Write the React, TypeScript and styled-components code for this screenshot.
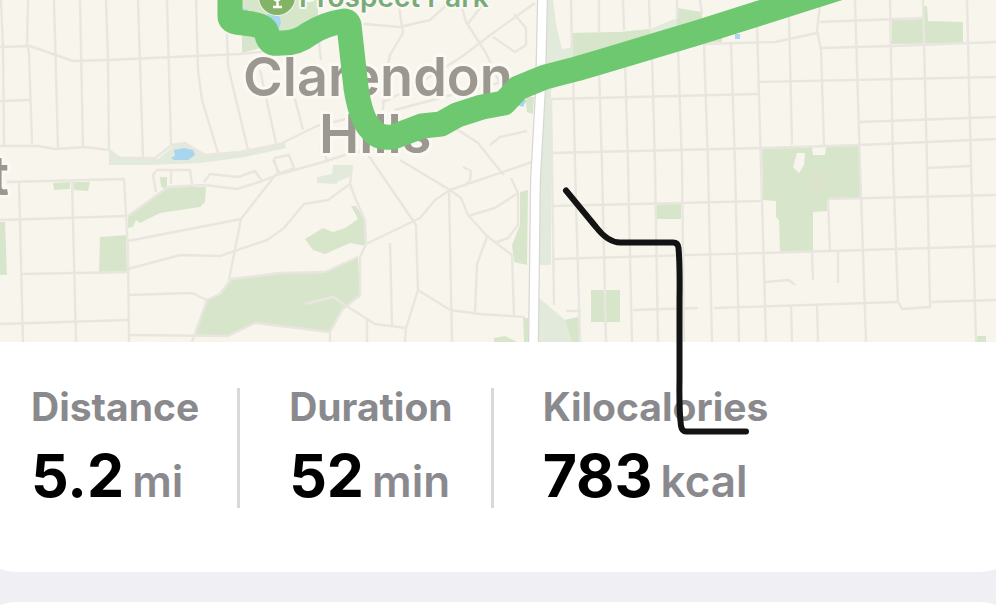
import React from "react";
import styled, { createGlobalStyle } from "styled-components";

const GlobalStyle = createGlobalStyle`
  *, *::before, *::after { box-sizing: border-box; }
  html, body { margin: 0; background: #f0eff4; }
  body { font-family: Inter, "Liberation Sans", sans-serif; overflow: hidden; }
`;

const Page = styled.main`
  position: relative;
  display: flex;
  flex-direction: column;
  gap: 30px;
  min-height: 100vh;
  overflow: hidden;
`;

const Card = styled.section<{ $edge: "top" | "bottom" }>`
  margin: 0 -28px;
  padding: 0 28px;
  background: #fff;
  overflow: hidden;
  border-radius: ${(p) => (p.$edge === "top" ? "44px 44px 0 0" : "0 0 44px 44px")};
  flex: ${(p) => (p.$edge === "top" ? "1 0 88px" : "none")};
`;

const MapView = styled.svg`
  display: block;
  width: 100%;
  height: 342px;
  background: #f8f5ed;
`;

const PlaceLabel = styled.text<{ $park?: boolean }>`
  font-family: Inter, sans-serif;
  font-size: ${(p) => (p.$park ? 28 : 54)}px;
  font-weight: 600;
  fill: ${(p) => (p.$park ? "#79ab78" : "#9c9890")};
  stroke: #fbf9f4;
  stroke-width: ${(p) => (p.$park ? 4 : 6)}px;
  stroke-linejoin: round;
  paint-order: stroke;
`;

const Stats = styled.dl`
  display: flex;
  margin: 0;
  padding: 46px 31px 64px;
`;

const Stat = styled.div`
  display: flex;
  flex-direction: column;
  height: 120px;
  & + & {
    padding-left: 49px;
  }
  &:not(:last-child) {
    padding-right: 38px;
    border-right: 3px solid #d9d9db;
  }
`;

const StatName = styled.dt`
  font-size: 39px;
  line-height: 38px;
  font-weight: 700;
  color: #8a8a8e;
`;

const StatValue = styled.dd`
  display: flex;
  align-items: baseline;
  gap: 8px;
  margin: 10px 0 0;
  font-size: 59px;
  line-height: 80px;
  font-weight: 700;
  color: #000;
`;

const Unit = styled.span`
  font-size: 44px;
  font-weight: 600;
  color: #8a8a8e;
`;

const Marker = styled.svg`
  position: absolute;
  left: 560px;
  top: 184px;
  width: 192px;
  height: 254px;
  pointer-events: none;
`;

const GREENS = [
  "0,222 5,222 7,275 0,275",
  "53,183 70,182 70,189 54,190",
  "73,182 90,182 88,191 74,190",
  "100,237 126,235 127,272 99,274",
  "128,217 168,187 206,187 205,202 200,207 160,213 140,223 136,220 133,227 128,228",
  "160,177 167,177 167,190 161,187",
  "195,335 207,300 222,293 231,280 280,273 325,272 358,257 360,297 342,310 330,332 270,325 255,323 228,336",
  "351,206 356,206 365,220 365,246 350,243 325,254 313,250 305,239 323,228 333,232 345,228 358,219",
  "520,192 528,190 527,265 514,262 512,245 520,225",
  "523,318 528,318 528,342 524,342",
  "494,338 505,336 517,342 494,342",
  "525,97 534,97 533,114 527,112",
  "242,0 318,0 318,20 290,40 242,53",
  "573,33 620,32 650,29 650,50 573,66",
  "677,8 702,12 702,26 677,26",
  "703,36 722,32 722,42 703,43",
  "892,20 922,19 923,6 927,6 928,21 963,22 963,43 892,44",
  "762,147 812,147 813,155 825,155 826,146 860,145 860,198 828,199 827,211 813,212 813,251 780,252 779,220 776,217 776,201 763,200",
  "656,204 681,204 681,219 656,219",
  "591,290 620,290 620,322 591,322",
  "977,336 986,336 986,342 977,342",
  "565,320 578,317 580,342 572,342",
];

const PALE_GREENS = [
  "109,149 122,159 158,159 174,146 186,143 206,155 245,152 285,143 286,148 245,157 200,163 150,165 109,165",
  "546,0 553,0 556,25 562,49 570,48 573,33 620,32 650,29 677,18 677,40 573,72 551,90 551,265 536,265",
  "538,297 565,320 578,317 580,342 538,342",
  "333,165 351,165 351,176 337,182 337,184 317,183 317,177 332,174",
];

const WATER = [
  "171,158 175,156 174,150 184,148 193,150 195,155 188,160 174,160",
  "242,8 248,10 248,14 242,14",
  "268,12 279,15 281,22 278,32 266,26",
  "517,100 521,95 526,101 523,107 517,105",
  "735,34 740,34 740,39 735,39",
];

const ROADS = [
  "1,0 3,47 4,145",
  "28,0 27,45 29,52 32,144",
  "54,0 58,148",
  "80,0 83,148",
  "106,0 108,60 109,150",
  "138,0 143,157",
  "167,0 171,145",
  "196,0 198,70 202,100 218,153",
  "227,34 228,66 248,150",
  "260,70 276,143",
  "0,47 30,46 73,61 107,60 240,54 280,50",
  "0,101 30,100",
  "0,146 38,146 55,149 85,147 109,150 120,158 155,158 172,145 185,143 205,155 240,152 280,144 317,126 350,118",
  "364,24 400,27 430,20 452,0",
  "398,0 403,33 390,55 385,80 383,110",
  "460,0 466,22 486,53 505,95",
  "535,3 493,33 460,58 413,87 382,103",
  "493,37 515,52 526,45 526,28 514,14",
  "467,25 490,-5",
  "395,110 440,98 478,88 510,80",
  "290,80 303,130",
  "318,35 321,60",
  "274,158 289,155 294,168 278,174 274,158",
  "280,174 323,162 345,155 400,143",
  "320,146 328,162",
  "455,128 478,143 498,168 504,175",
  "490,145 500,137 527,131",
  "463,167 471,171 470,180 465,186",
  "7,182 124,179 128,250 129,342",
  "19,182 23,342",
  "72,180 76,342",
  "0,220 127,216",
  "22,274 127,272",
  "0,324 128,320",
  "156,192 153,175 157,170 190,170 192,184",
  "171,171 171,184",
  "128,216 168,187 205,185 237,189 262,181 280,174 273,160",
  "204,182 210,174 238,177 255,171 262,181",
  "276,174 241,219 229,280",
  "128,241 241,219",
  "128,269 180,255 220,256 267,240 284,228 304,204 328,200 350,184 352,165",
  "128,295 192,293 207,300",
  "128,335 228,336 255,323 330,332",
  "192,342 207,300 220,294 231,279 280,273 325,272 358,257",
  "350,184 356,200 365,220 366,244 360,257 360,295 342,310 330,332 330,342",
  "366,244 420,218 435,200 450,190 538,160",
  "375,165 416,225 418,290 406,328 405,342",
  "365,150 375,165",
  "390,243 392,325",
  "449,191 452,342",
  "400,160 450,190 461,198 468,215 487,236 512,255",
  "468,216 495,208 518,193 518,225 508,238 497,242",
  "518,193 511,178",
  "487,237 477,264 475,312",
  "512,255 514,316",
  "418,290 450,310 480,314 525,317",
  "305,304 333,297 345,305 375,324 406,328",
  "367,318 367,342",
  "571,0 572,48",
  "599,0 599,32",
  "623,0 624,30",
  "649,0 650,28",
  "677,0 677,18",
  "700,0 702,14",
  "573,70 575,165 580,342",
  "599,70 602,165 606,342",
  "625,60 628,165 632,342",
  "652,55 655,165 658,342",
  "678,48 682,165 684,342",
  "704,44 708,165 712,342",
  "731,44 735,165 739,342",
  "551,100 552,165 554,305",
  "550,99 758,94",
  "550,153 762,148 860,145 996,139",
  "552,206 762,201",
  "554,259 830,251 996,246",
  "633,310 698,308",
  "714,308 898,302",
  "930,302 996,300",
  "566,311 581,311",
  "703,44 775,42 817,33",
  "757,25 761,165 766,342",
  "789,17 792,145",
  "820,5 817,30 821,50 824,145",
  "855,0 860,165 866,342",
  "890,0 893,165 898,302 902,309 930,307 927,165 923,0",
  "967,0 971,165 976,342",
  "820,22 922,18",
  "821,48 892,46 996,42",
  "757,82 996,77",
  "860,122 996,117",
  "927,168 970,166",
  "828,199 996,195",
  "828,199 830,250",
  "812,253 813,280",
  "838,252 838,283",
  "765,282 789,280 795,285",
  "791,306 792,342",
  "817,306 818,342",
];

const ROUTE =
  "M230-14V16Q230 21 236 22L252 24Q267 26 267 35Q269 45 280 43Q296 44 309 34Q324 24 344 21Q348 21 349 25L356 88Q361 120 371 129Q378 139 393 137L422 126L441 124L457 115L482 107L504 103L518 88L545 77L576 69L600 62L640 50L700 32L760 13L842-13";

function WorkoutMap() {
  return (
    <MapView viewBox="0 0 996 342" preserveAspectRatio="xMidYMid slice" role="img" aria-label="Route map of Clarendon Hills">
      <g fill="#e1eadb">
        {PALE_GREENS.map((p) => <polygon key={p} points={p} />)}
      </g>
      <g fill="#d7e6cb">
        {GREENS.map((p) => <polygon key={p} points={p} />)}
      </g>
      <polygon points="797,153 805,153 804,165 799,173 793,167" fill="#f8f5ed" />
      <rect x="810" y="172" width="16" height="19" rx="3" fill="#dce3cb" />
      <g fill="none" stroke="#e9e6df" strokeWidth="2.4" strokeLinejoin="round">
        {ROADS.map((p) => <polyline key={p} points={p} />)}
      </g>
      <g fill="#a9d5ee">
        {WATER.map((p) => <polygon key={p} points={p} />)}
      </g>
      <path d="M542.5-2L540.5 90L535.5 180L533.5 344" fill="none" stroke="#d9d7d0" strokeWidth="11" />
      <path d="M542.5-2L540.5 90L535.5 180L533.5 344" fill="none" stroke="#fff" strokeWidth="8.5" />
      <circle cx="277" cy="-3" r="19" fill="#f3f5ea" />
      <circle cx="277" cy="-3" r="18" fill="#83b364" />
      <path d="M277.5-8V6M273 7H282M271-3L277 1L283-3" fill="none" stroke="#fff" strokeWidth="2.5" />
      <PlaceLabel $park x="299" y="7">Prospect Park</PlaceLabel>
      <PlaceLabel x="243" y="96">Clarendon</PlaceLabel>
      <PlaceLabel x="319" y="153">Hills</PlaceLabel>
      <PlaceLabel x="9" y="195" textAnchor="end">t</PlaceLabel>
      <path d={ROUTE} fill="none" stroke="#6dc86f" strokeWidth="25" strokeLinejoin="round" />
    </MapView>
  );
}

const STATS = [
  { name: "Distance", value: "5.2", unit: "mi" },
  { name: "Duration", value: "52", unit: "min" },
  { name: "Kilocalories", value: "783", unit: "kcal" },
];

export default function App() {
  return (
    <>
      <GlobalStyle />
      <Page>
        <Card $edge="bottom">
          <WorkoutMap />
          <Stats>
            {STATS.map((s) => (
              <Stat key={s.name}>
                <StatName>{s.name}</StatName>
                <StatValue>
                  {s.value}
                  <Unit>{s.unit}</Unit>
                </StatValue>
              </Stat>
            ))}
          </Stats>
        </Card>
        <Card $edge="top" />
        <Marker viewBox="560 184 192 254" aria-hidden="true">
          <path
            d="M566 190.500L596 227Q608 242.500 620 242.500H673Q678 242.500 678.500 248Q680 265 679.500 300V380Q679 410 681 426Q682 431.500 686 431.500H746"
            fill="none"
            stroke="#131313"
            strokeWidth="6"
            strokeLinecap="round"
            strokeLinejoin="round"
          />
        </Marker>
      </Page>
    </>
  );
}
